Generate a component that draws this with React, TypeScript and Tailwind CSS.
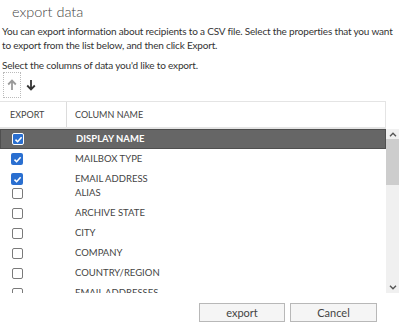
import React from "react";

const rows: { name: string; checked: boolean; selected?: boolean; tight?: boolean }[] = [
  { name: "DISPLAY NAME", checked: true, selected: true },
  { name: "MAILBOX TYPE", checked: true },
  { name: "EMAIL ADDRESS", checked: true },
  { name: "ALIAS", checked: false, tight: true },
  { name: "ARCHIVE STATE", checked: false },
  { name: "CITY", checked: false },
  { name: "COMPANY", checked: false },
  { name: "COUNTRY/REGION", checked: false },
  { name: "EMAIL ADDRESSES", checked: false },
];

function Box({ checked, selected }: { checked: boolean; selected?: boolean }) {
  if (checked) {
    return (
      <div
        className={
          "w-[12px] h-[12px] rounded-[2px] bg-[#2a6fd0] flex items-center justify-center " +
          (selected ? "border border-white" : "")
        }
      >
        <svg width="9" height="9" viewBox="0 0 9 9">
          <path d="M1.5 4.6 L3.6 6.7 L7.6 2.2" fill="none" stroke="#fff" strokeWidth="1.6" />
        </svg>
      </div>
    );
  }
  return <div className="w-[11px] h-[11px] rounded-[2px] border border-[#7a7a7a] bg-white" />;
}

export default function App() {
  return (
    <div
      className="w-[400px] h-[323px] bg-white overflow-hidden relative text-[#333]"
      style={{ fontFamily: 'Lato, "Open Sans", sans-serif' }}
    >
      <div className="pl-[12px] pt-[2px] text-[14.5px] font-light text-[#444] leading-[20px]">export data</div>
      <div className="pl-[2px] mt-[2px] text-[10px] tracking-[-0.18px] leading-[14px] text-[#333]">
        You can export information about recipients to a CSV file. Select the properties that you want to export from the list below, and then click Export.
      </div>
      <div className="pl-[2px] mt-[6px] text-[10px] tracking-[-0.18px] leading-[14px] text-[#333]">
        Select the columns of data you'd like to export.
      </div>
      <div className="flex items-center h-[26px] pl-[3px] gap-[3px]">
        <div className="w-[18px] h-[26px] border border-dotted border-[#bbb] flex items-center justify-center">
          <svg width="10" height="12" viewBox="0 0 10 12">
            <path d="M5 11 V2 M1.2 5.5 L5 1.6 L8.8 5.5" fill="none" stroke="#9a9a9a" strokeWidth="1.8" />
          </svg>
        </div>
        <div className="w-[14px] h-[26px] flex items-center justify-center">
          <svg width="10" height="12" viewBox="0 0 10 12">
            <path d="M5 1 V10 M1.2 6.5 L5 10.4 L8.8 6.5" fill="none" stroke="#333" strokeWidth="1.8" />
          </svg>
        </div>
      </div>
      <div className="mt-[3px] w-[386px] h-[28px] border-t border-b-2 border-r border-[#e4e4e4] flex items-center text-[9px] text-[#444]">
        <div className="w-[67px] h-full border-r border-[#dcdcdc] flex items-center pl-[10px]">EXPORT</div>
        <div className="pl-[8px]">COLUMN NAME</div>
      </div>
      <div className="flex h-[164px]">
        <div className="w-[386px] overflow-hidden">
          {rows.map((r) => (
            <div
              key={r.name}
              className={
                "h-[20px] flex items-center text-[9.5px] " +
                (r.selected ? "bg-[#666] border border-[#4f4f4f] text-white font-bold " : "text-[#444] ") +
                (r.tight ? "-mt-[6px]" : "")
              }
            >
              <div className="w-[67px] pl-[11px] flex items-center">
                <div className={r.checked ? "" : "pl-[1px]"}>
                  <Box checked={r.checked} selected={r.selected} />
                </div>
              </div>
              <div className="pl-[8px]">{r.name}</div>
            </div>
          ))}
        </div>
        <div className="w-[13px] bg-[#f0f0f0] flex flex-col items-center">
          <div className="h-[10px] flex items-center justify-center">
            <svg width="8" height="5" viewBox="0 0 8 5">
              <path d="M1 4.2 L4 1.2 L7 4.2" fill="none" stroke="#555" strokeWidth="1.4" />
            </svg>
          </div>
          <div className="w-full h-[46px] bg-[#cdcdcd]" />
          <div className="flex-1" />
          <div className="h-[12px] flex items-center justify-center">
            <svg width="8" height="5" viewBox="0 0 8 5">
              <path d="M1 0.8 L4 3.8 L7 0.8" fill="none" stroke="#555" strokeWidth="1.4" />
            </svg>
          </div>
        </div>
      </div>
      <div className="flex gap-[5px] pl-[199px] mt-[10px]">
        <button className="w-[86px] h-[19px] bg-[#f5f5f5] border border-[#b8b8b8] text-[11px] text-[#444] leading-[17px]">
          export
        </button>
        <button className="w-[87px] h-[19px] bg-[#f5f5f5] border border-[#b8b8b8] text-[11px] text-[#444] leading-[17px]">
          Cancel
        </button>
      </div>
    </div>
  );
}
